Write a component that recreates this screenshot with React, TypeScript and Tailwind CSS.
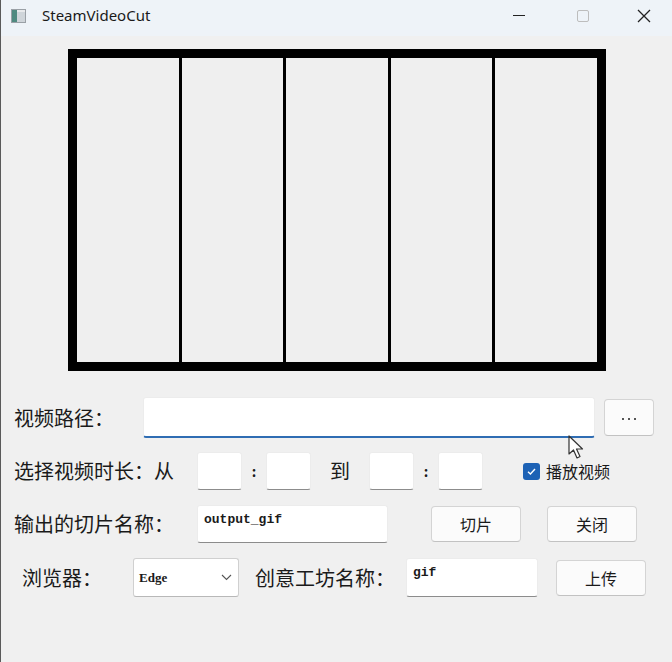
import React from "react";

const cjk = { fontFamily: '"Noto Sans CJK SC", "Noto Sans", sans-serif' };

function Btn({ label, className = "" }: { label: string; className?: string }) {
  return (
    <div
      className={
        "flex items-center justify-center rounded-[4px] border border-[#d4d4d4] border-b-[#c2c2c2] bg-[#fbfbfb] text-[16px] text-[#1a1a1a] " +
        className
      }
      style={cjk}
    >
      {label}
    </div>
  );
}

function SmallInput() {
  return <div className="w-[45px] h-[38px] bg-white rounded-[3px] border border-[#ececec] border-b-[#8c8c8c]" />;
}

export default function App() {
  return (
    <div className="w-[672px] h-[662px] bg-[#f0f0f0] border-l border-[#5a5a5a] relative overflow-hidden text-[#1a1a1a]">
      {/* title bar */}
      <div className="h-[36px] bg-[#eef3f8] flex items-center pb-[5px]">
        <div className="ml-[10px] w-[15px] h-[14px] border border-[#9aa0a6] bg-[#e8eaec] flex">
          <div className="w-[5px] h-full bg-[#4f8a80]" />
          <div className="flex-1 bg-[#cfd5da] mt-[2px]" />
        </div>
        <div className="ml-[16px] text-[15px] text-[#1a1a1a]" style={{ fontFamily: '"Noto Sans", sans-serif' }}>
          SteamVideoCut
        </div>
        <div className="flex-1" />
        <div className="w-[12px] h-[1.5px] bg-[#222] mr-[52px]" />
        <div className="w-[12px] h-[12px] border border-[#bdbdbd] rounded-[2px] mr-[48px]" />
        <svg width="14" height="14" viewBox="0 0 14 14" className="mr-[21px]">
          <path d="M1 1 L13 13 M13 1 L1 13" stroke="#222" strokeWidth="1.3" />
        </svg>
      </div>

      {/* video frame */}
      <div className="ml-[67px] mt-[13px] w-[538px] h-[322px] border-[9px] border-black bg-black flex gap-[3px]">
        <div className="flex-1 bg-[#efefef]" />
        <div className="flex-1 bg-[#efefef]" />
        <div className="flex-1 bg-[#efefef]" />
        <div className="flex-1 bg-[#efefef]" />
        <div className="flex-1 bg-[#efefef]" />
      </div>

      {/* row 1 */}
      <div className="mt-[26px] flex items-center pl-[13px]">
        <div className="w-[129px] text-[20px]" style={cjk}>视频路径：</div>
        <div className="w-[452px] h-[41px] bg-white rounded-[3px] border border-[#ececec] border-b-2 border-b-[#2f6db3]" />
        <div className="ml-[9px] w-[50px] h-[37px] rounded-[4px] border border-[#d4d4d4] border-b-[#c2c2c2] bg-[#fbfbfb] flex items-center justify-center gap-[4px] pt-[3px]">
          <div className="w-[2px] h-[2px] bg-[#555]" />
          <div className="w-[2px] h-[2px] bg-[#555]" />
          <div className="w-[2px] h-[2px] bg-[#555]" />
        </div>
      </div>

      {/* row 2 */}
      <div className="mt-[14px] flex items-center pl-[13px] h-[38px]">
        <div className="w-[183px] text-[20px] whitespace-nowrap" style={cjk}>选择视频时长：从</div>
        <SmallInput />
        <div className="w-[24px] text-center text-[14px] font-bold" style={cjk}>:</div>
        <SmallInput />
        <div className="w-[58px] text-center text-[20px]" style={cjk}>到</div>
        <SmallInput />
        <div className="w-[24px] text-center text-[14px] font-bold" style={cjk}>:</div>
        <SmallInput />
        <div className="ml-[40px] w-[17px] h-[17px] rounded-[3px] bg-[#1d62b5] flex items-center justify-center">
          <svg width="11" height="11" viewBox="0 0 11 11">
            <path d="M2 5.8 L4.4 8 L9 3" stroke="white" strokeWidth="1.4" fill="none" />
          </svg>
        </div>
        <div className="ml-[6px] text-[16px]" style={cjk}>播放视频</div>
      </div>

      {/* row 3 */}
      <div className="mt-[15px] flex items-center pl-[13px] h-[38px]">
        <div className="w-[183px] text-[20px] whitespace-nowrap" style={cjk}>输出的切片名称：</div>
        <div className="w-[191px] h-[38px] bg-white rounded-[3px] border border-[#ececec] border-b-[#8c8c8c] pl-[6px] pt-[4px] text-[13px] font-bold" style={{ fontFamily: '"Liberation Mono", monospace' }}>
          output_gif
        </div>
        <Btn label="切片" className="ml-[43px] w-[90px] h-[36px]" />
        <Btn label="关闭" className="ml-[26px] w-[90px] h-[36px]" />
      </div>

      {/* row 4 */}
      <div className="mt-[15px] flex items-center pl-[21px] h-[39px]">
        <div className="w-[111px] text-[20px]" style={cjk}>浏览器：</div>
        <div className="w-[106px] h-[39px] bg-white rounded-[3px] border border-[#d0d0d0] border-b-[#b8b8b8] flex items-center pl-[5px] pr-[6px]">
          <span className="text-[13px] font-bold flex-1" style={{ fontFamily: '"Liberation Serif", serif' }}>Edge</span>
          <svg width="11" height="7" viewBox="0 0 11 7">
            <path d="M1 1 L5.5 5.5 L10 1" stroke="#555" strokeWidth="1.1" fill="none" />
          </svg>
        </div>
        <div className="ml-[16px] w-[151px] text-[20px] whitespace-nowrap" style={cjk}>创意工坊名称：</div>
        <div className="w-[132px] h-[39px] bg-white rounded-[3px] border border-[#ececec] border-b-[#8c8c8c] pl-[6px] pt-[4px] text-[13px] font-bold" style={{ fontFamily: '"Liberation Mono", monospace' }}>
          gif
        </div>
        <Btn label="上传" className="ml-[18px] w-[90px] h-[36px]" />
      </div>

      {/* mouse cursor */}
      <svg className="absolute left-[567px] top-[435px]" width="18" height="26" viewBox="0 0 18 26">
        <path d="M1 1 L1 19 L5.5 15 L9 23 L12 21.5 L8.5 14 L14.5 14 Z" fill="white" stroke="#333" strokeWidth="1.2" strokeLinejoin="round" />
      </svg>
    </div>
  );
}
